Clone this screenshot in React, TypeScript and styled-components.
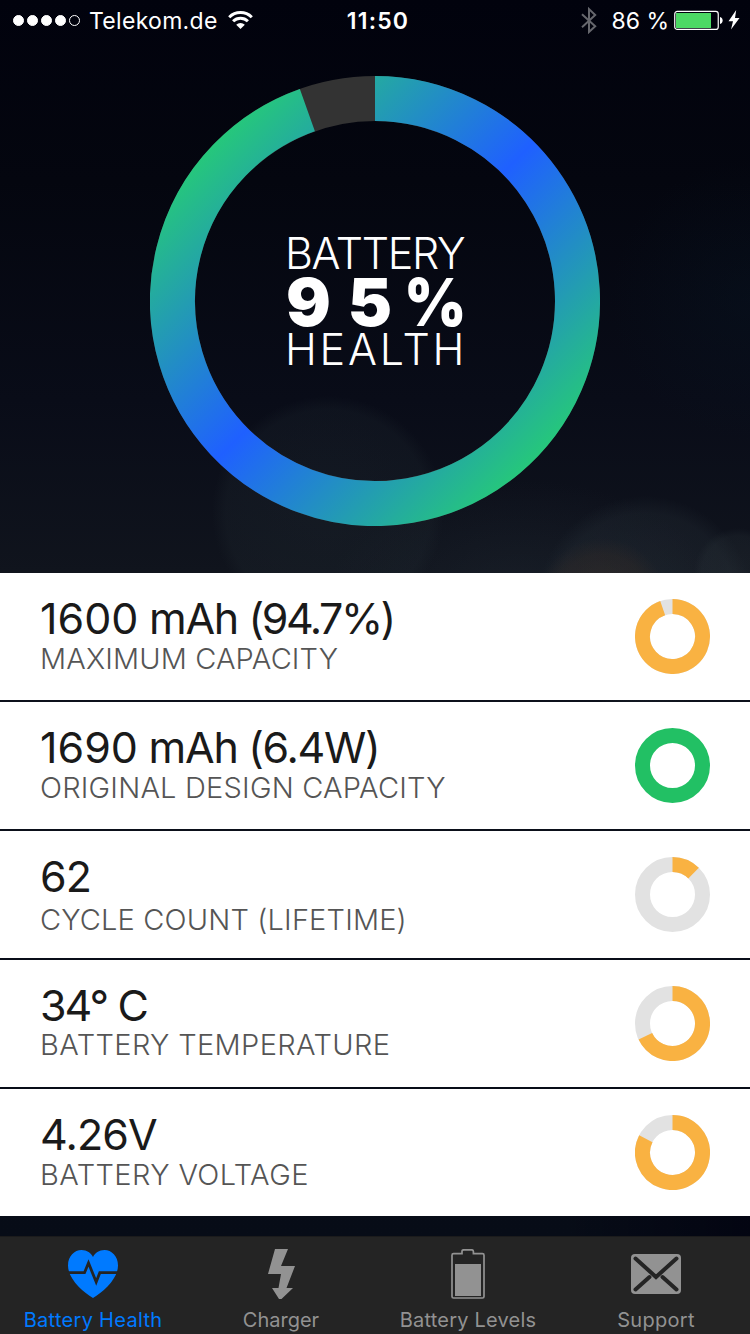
import React from "react";
import styled, { createGlobalStyle } from "styled-components";

const Global = createGlobalStyle`
  * { box-sizing: border-box; }
  body { margin: 0; background: #02030d; font-family: Inter, "Liberation Sans", sans-serif; }
`;

const Screen = styled.div`
  width: 750px;
  height: 1334px;
  display: flex;
  flex-direction: column;
  overflow: hidden;
  background:
    radial-gradient(circle 116px at 328px 512px, rgba(40, 52, 58, 0.24) 0%, rgba(40, 52, 58, 0.18) 88%, transparent 100%),
    radial-gradient(circle 66px at 602px 604px, rgba(70, 52, 40, 0.42) 0%, rgba(60, 46, 38, 0.28) 75%, transparent 100%),
    radial-gradient(circle 44px at 738px 572px, rgba(50, 60, 65, 0.26) 0%, rgba(50, 60, 65, 0.2) 82%, transparent 100%),
    radial-gradient(circle 108px at 645px 604px, rgba(44, 54, 62, 0.36) 0%, rgba(44, 54, 62, 0.24) 84%, transparent 100%),
    radial-gradient(ellipse 190px 110px at 520px 590px, rgba(40, 50, 60, 0.3) 0%, transparent 100%),
    radial-gradient(circle 140px at 750px 300px, rgba(8, 24, 38, 0.3) 0%, transparent 100%),
    linear-gradient(90deg, transparent 0 75%, rgba(0, 0, 14, 0.6) 100%) 0 1216px / 750px 20px no-repeat,
    linear-gradient(180deg, #01020d 0, #04060f 180px, #090c18 400px, #10141d 573px, #0a0e19 900px, #070c17 1236px);
`;

const StatusBar = styled.header`
  height: 40px;
  flex: none;
  display: grid;
  grid-template-columns: 1fr auto 1fr;
  align-items: center;
  padding: 0 10px 0 13px;
  color: #fff;
  font-size: 23px;
  line-height: 38px;
`;

const StatusGroup = styled.div<{ $end?: boolean }>`
  display: flex;
  align-items: center;
  justify-content: ${(p) => (p.$end ? "flex-end" : "flex-start")};
  white-space: nowrap;
`;

const Signal = styled.div`
  display: flex;
  gap: 3px;
  margin-right: 9px;
`;

const Dot = styled.i<{ $empty?: boolean }>`
  width: 11px;
  height: 11px;
  border-radius: 50%;
  border: 1px solid #fff;
  background: ${(p) => (p.$empty ? "transparent" : "#fff")};
`;

const StatusText = styled.span`
  padding-top: 2px;
`;

const Carrier = styled(StatusText)`
  width: 128px;
  margin-right: 11px;
  letter-spacing: 0.3px;
`;

const Clock = styled(StatusText)`
  font-weight: 600;
  letter-spacing: 1.2px;
  margin-left: 3px;
`;

const Percent = styled(StatusText)`
  margin: 0 5px 0 14px;
  letter-spacing: 0;
`;

const Hero = styled.section`
  height: 533px;
  flex: none;
  display: flex;
  justify-content: center;
  padding-top: 36px;
`;

const Gauge = styled.div`
  display: grid;
  width: 450px;
  height: 450px;
  > * { grid-area: 1 / 1; }
`;

const HeroText = styled.div`
  align-self: center;
  justify-self: center;
  width: 178px;
  color: #fff;
  white-space: nowrap;
`;

const HeroWord = styled.div<{ $spacing: number }>`
  font-size: 43px;
  line-height: 44px;
  font-weight: 300;
  margin-left: -1px;
  letter-spacing: ${(p) => p.$spacing}px;
`;

const HeroValue = styled.div`
  height: 52px;
  font-size: 66.5px;
  line-height: 54px;
  font-weight: 900;
  letter-spacing: 17px;
`;

const PercentSign = styled.span`
  display: inline-block;
  margin-left: -5px;
  letter-spacing: 0;
  transform: scaleX(0.9);
  transform-origin: left;
`;

const List = styled.main`
  display: flex;
  flex-direction: column;
  gap: 2px;
  flex: none;
`;

const Row = styled.article`
  height: 127px;
  display: flex;
  align-items: center;
  justify-content: space-between;
  padding: 0 40px;
  background: #fff;
`;

const RowText = styled.div`
  height: 127px;
  padding-top: 19px;
  white-space: nowrap;
`;

const Value = styled.div`
  display: flex;
  gap: 10.5px;
  font-size: 43px;
  line-height: 52px;
  color: #1a1a1a;
`;

const Word = styled.span<{ $spacing: number }>`
  letter-spacing: ${(p) => p.$spacing}px;
`;

const Label = styled.div<{ $spacing: number; $shift: number }>`
  font-size: 29px;
  line-height: 28px;
  font-weight: 300;
  color: #555;
  margin-top: ${(p) => p.$shift}px;
  letter-spacing: ${(p) => p.$spacing}px;
`;

const TabBar = styled.nav`
  height: 98px;
  margin-top: auto;
  flex: none;
  display: grid;
  grid-template-columns: 186px 190px 184px 190px;
  background: #242424;
  border-top: 1px solid #1b1b1c;
`;

const Tab = styled.a<{ $active?: boolean; $spacing: number }>`
  display: flex;
  flex-direction: column;
  align-items: center;
  padding-top: 12px;
  color: ${(p) => (p.$active ? "#007aff" : "#929292")};
  font-size: 20px;
  line-height: 24px;
  letter-spacing: ${(p) => p.$spacing}px;
  white-space: nowrap;
  svg { margin-bottom: 9px; }
  &:last-child { padding-left: 2px; }
`;

const arc = (c: number, r: number, value: number) => {
  const a = value * Math.PI * 2;
  return `M${c} ${c - r}A${r} ${r} 0 ${value > 0.5 ? 1 : 0} 1 ${c + r * Math.sin(a)} ${c - r * Math.cos(a)}`;
};

const HealthRing = () => (
  <svg width="450" height="450" viewBox="0 0 450 450">
    <defs>
      <linearGradient id="ring" gradientUnits="userSpaceOnUse" x1="60" y1="60" x2="390" y2="390">
        <stop offset="0" stopColor="#26cb76" />
        <stop offset="0.5" stopColor="#1f60ff" />
        <stop offset="1" stopColor="#26cb76" />
      </linearGradient>
    </defs>
    <circle cx="225" cy="225" r="202.5" fill="none" stroke="#333" strokeWidth="45" />
    <path d={arc(225, 202.5, 0.9458)} fill="none" stroke="url(#ring)" strokeWidth="45" />
  </svg>
);

const MiniRing = ({ value, color }: { value: number; color: string }) => (
  <svg width="75" height="75" viewBox="0 0 75 75">
    <circle cx="37.5" cy="37.5" r="30" fill="none" stroke={value === 1 ? color : "#e2e2e2"} strokeWidth="15" />
    {value < 1 && <path d={arc(37.5, 30, value)} fill="none" stroke={color} strokeWidth="15" />}
  </svg>
);

const Wifi = () => (
  <svg width="25" height="20" viewBox="0 0 25 20" fill="none" stroke="#fff" strokeWidth="3">
    <path d="M1.2 7.2A16 16 0 0 1 23.8 7.2" />
    <path d="M5.1 11.3A10.5 10.5 0 0 1 19.9 11.3" />
    <path d="M12.5 19L8.2 14.7A6.2 6.2 0 0 1 16.8 14.7Z" fill="#fff" stroke="none" />
  </svg>
);

const Bluetooth = () => (
  <svg width="16" height="28" viewBox="0 0 16 28" fill="none" stroke="#66676d" strokeWidth="2">
    <path d="M1 8.3L14.2 20.3L8 26V3L14.2 9L1 21.2" />
  </svg>
);

const StatusBattery = () => (
  <svg width="49" height="20" viewBox="0 0 49 20">
    <rect x="0.75" y="1.4" width="43.5" height="18" rx="2.5" fill="none" stroke="#fff" strokeWidth="1.2" />
    <rect x="2" y="3" width="35" height="15" fill="#4cd964" />
    <path d="M46 7C49.5 7.5 49.5 13.5 46 14Z" fill="#fff" />
  </svg>
);

const Charging = styled.svg`
  margin-left: 5px;
`;

const Heart = () => (
  <svg width="50" height="50" viewBox="0 0 50 50">
    <path
      d="M25 49C15 43 0 30 0 16.5C0 7 6.5 1 13.5 1C19 1 23 4 25 8C27 4 31 1 36.5 1C43.5 1 50 7 50 16.5C50 30 35 43 25 49Z"
      fill="currentColor"
    />
    <path d="M-1 23.7H16.5L20.5 14L28.2 33L31.8 23.7H51" fill="none" stroke="#242424" strokeWidth="2.8" />
  </svg>
);

const Bolt = () => (
  <svg width="50" height="50" viewBox="0 0 50 50">
    <path d="M19 0H32L25 17H39L30.5 39H37L25.5 50H23L16 39H22.5L25 25H12Z" fill="currentColor" />
  </svg>
);

const BatteryIcon = () => (
  <svg width="50" height="50" viewBox="0 0 50 50">
    <path
      d="M10.5 4.7H19V2.5Q19 0.8 20.8 0.8H28.6Q30.4 0.8 30.4 2.5V4.7H39.5Q41 4.7 41 6.2V47.5Q41 49 39.5 49H10.5Q9 49 9 47.5V6.2Q9 4.7 10.5 4.7Z"
      fill="none"
      stroke="currentColor"
      strokeWidth="1.7"
    />
    <path d="M12 15H38V47H12Z" fill="currentColor" />
  </svg>
);

const Mail = () => (
  <svg width="50" height="50" viewBox="0 0 50 50">
    <rect y="5" width="50" height="40" rx="4" fill="currentColor" />
    <path d="M4.5 9.5L25 28L45.5 9.5M4.5 40.5L18.5 28M45.5 40.5L31.5 28" fill="none" stroke="#242424" strokeWidth="4" strokeLinecap="round" />
  </svg>
);

const ORANGE = "#f9b242";
const GREEN = "#22c064";

type Part = [text: string, spacing: number];

const rows: { parts: Part[]; label: string; ring: number; spacing: number; shift: number }[] = [
  { parts: [["1600", 0], ["mAh", -1.2], ["(94.7%)", -2.5]], label: "MAXIMUM CAPACITY", ring: 0.947, spacing: 0.13, shift: 1 },
  { parts: [["1690", 0], ["mAh", -1.2], ["(6.4W)", -1.3]], label: "ORIGINAL DESIGN CAPACITY", ring: 1, spacing: 0.2, shift: 1 },
  { parts: [["62", -0.8]], label: "CYCLE COUNT (LIFETIME)", ring: 0.124, spacing: 0.16, shift: 4 },
  { parts: [["34°", -2], ["C", -1.2]], label: "BATTERY TEMPERATURE", ring: 0.68, spacing: 0.37, shift: 0 },
  { parts: [["4.26V", -0.9]], label: "BATTERY VOLTAGE", ring: 0.826, spacing: 0.4, shift: 1 },
];

export default function App() {
  return (
    <Screen>
      <Global />
      <StatusBar>
        <StatusGroup>
          <Signal>
            <Dot /><Dot /><Dot /><Dot /><Dot $empty />
          </Signal>
          <Carrier>Telekom.de</Carrier>
          <Wifi />
        </StatusGroup>
        <Clock>11:50</Clock>
        <StatusGroup $end>
          <Bluetooth />
          <Percent>86 %</Percent>
          <StatusBattery />
          <Charging width="12" height="20" viewBox="0 0 12 20">
            <path d="M8.2 0L0.5 11.2H5L3 19.5L11.5 8H7Z" fill="#fff" />
          </Charging>
        </StatusGroup>
      </StatusBar>
      <Hero>
        <Gauge>
          <HealthRing />
          <HeroText>
            <HeroWord $spacing={-1.3}>BATTERY</HeroWord>
            <HeroValue>95<PercentSign>%</PercentSign></HeroValue>
            <HeroWord $spacing={2.75}>HEALTH</HeroWord>
          </HeroText>
        </Gauge>
      </Hero>
      <List>
        {rows.map((r) => (
          <Row key={r.label}>
            <RowText>
              <Value>
                {r.parts.map(([text, spacing]) => (
                  <Word key={text} $spacing={spacing}>{text}</Word>
                ))}
              </Value>
              <Label $spacing={r.spacing} $shift={r.shift}>{r.label}</Label>
            </RowText>
            <MiniRing value={r.ring} color={r.ring === 1 ? GREEN : ORANGE} />
          </Row>
        ))}
      </List>
      <TabBar>
        <Tab $active $spacing={0.3}><Heart />Battery Health</Tab>
        <Tab $spacing={0}><Bolt />Charger</Tab>
        <Tab $spacing={0.2}><BatteryIcon />Battery Levels</Tab>
        <Tab $spacing={0.3}><Mail />Support</Tab>
      </TabBar>
    </Screen>
  );
}
